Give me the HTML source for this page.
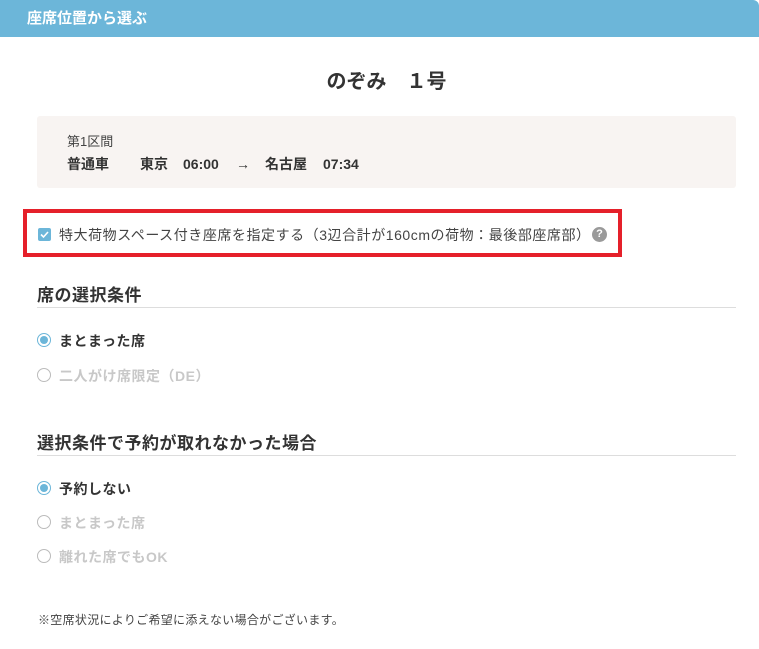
<!DOCTYPE html><html><head><meta charset="utf-8"><style>
*{margin:0;padding:0;box-sizing:border-box}
body{width:759px;height:649px;background:#fff;font-family:"Liberation Sans","Noto Sans CJK JP",sans-serif;color:#333;position:relative;overflow:hidden}
.hd{position:absolute;left:0;top:0;width:759px;height:37px;background:#6cb6d9;border-top-right-radius:6px;color:#fff;font-weight:bold;font-size:15px;line-height:37px;padding-left:27px}
.t{position:absolute;top:65px;left:0;width:759px;text-align:center;font-size:20px;font-weight:bold;color:#333;padding-left:14px}
.box{position:absolute;left:37px;top:116px;width:699px;height:72px;background:#f8f4f2;border-radius:3px}
.a{position:absolute;left:67px;top:131px;font-size:13px;color:#444}
.b{position:absolute;top:154px;height:20px;line-height:20px;font-size:14px;font-weight:bold;white-space:pre}
.red{position:absolute;left:23px;top:209px;width:599px;height:48px;border:4px solid #e5202a}
.cb{position:absolute;left:38px;top:228px;width:13px;height:13px;background:#6cb6d9;border-radius:2px}
.ct{position:absolute;left:59px;top:225px;font-size:14px;color:#444;letter-spacing:0.55px}
.q{position:absolute;left:592px;top:227px;width:15px;height:15px;border-radius:50%;background:#9a9a9a;color:#fff;font-size:11px;font-weight:bold;text-align:center;line-height:15px}
.h2{position:absolute;left:37px;font-size:17px;font-weight:bold;color:#333;letter-spacing:0.5px}
.ln{position:absolute;left:37px;width:699px;height:1px;background:#ddd}
.r{position:absolute;left:37px;width:14px;height:14px;border-radius:50%;border:1px solid #bbb;background:#fff}
.r.on{border-color:#6cb6d9}.r.on:after{content:"";position:absolute;left:2px;top:2px;width:8px;height:8px;border-radius:50%;background:#6cb6d9}
.rl{position:absolute;left:59px;font-size:14px;font-weight:bold;color:#333;letter-spacing:0.5px}
.rl.off{color:#c8c8c8}
.note{position:absolute;left:38px;top:611px;font-size:12px;color:#444;letter-spacing:0.3px}
</style></head><body>
<div class="hd">座席位置から選ぶ</div>
<div class="t">のぞみ　１号</div>
<div class="box"></div>
<div class="a">第1区間</div>
<div class="b" style="left:67px">普通車</div>
<div class="b" style="left:140px">東京</div>
<div class="b" style="left:183px">06:00</div>
<div class="b" style="left:236px">→</div>
<div class="b" style="left:265px">名古屋</div>
<div class="b" style="left:323px">07:34</div>
<div class="red"></div>
<div class="cb"><svg width="13" height="13" viewBox="0 0 13 13"><path d="M3 6.5l2.5 2.5 4.5-5" stroke="#fff" stroke-width="1.6" fill="none"/></svg></div>
<div class="ct">特大荷物スペース付き座席を指定する（3辺合計が160cmの荷物：最後部座席部）</div>
<div class="q">?</div>
<div class="h2" style="top:281px">席の選択条件</div>
<div class="ln" style="top:307px"></div>
<div class="r on" style="top:333px"></div><div class="rl" style="top:331px">まとまった席</div>
<div class="r" style="top:368px"></div><div class="rl off" style="top:366px">二人がけ席限定（DE）</div>
<div class="h2" style="top:429px">選択条件で予約が取れなかった場合</div>
<div class="ln" style="top:455px"></div>
<div class="r on" style="top:481px"></div><div class="rl" style="top:479px">予約しない</div>
<div class="r" style="top:515px"></div><div class="rl off" style="top:513px">まとまった席</div>
<div class="r" style="top:549px"></div><div class="rl off" style="top:547px">離れた席でもOK</div>
<div class="note">※空席状況によりご希望に添えない場合がございます。</div>
</body></html>
